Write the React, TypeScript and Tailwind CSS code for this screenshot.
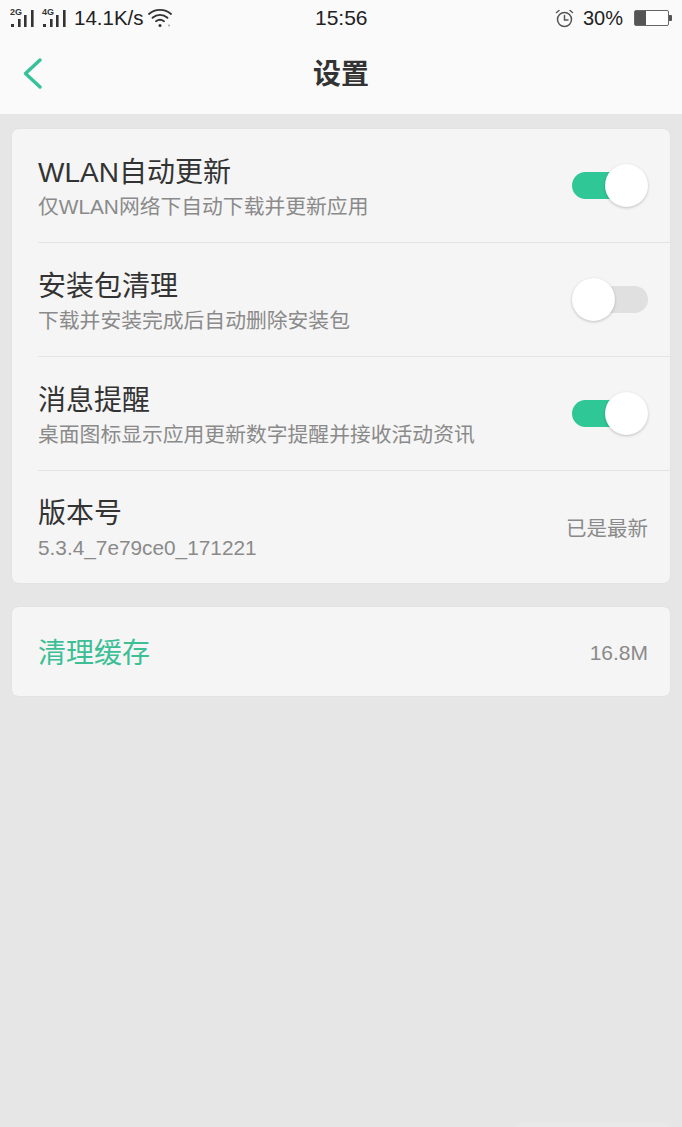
import React from 'react';

const font = { fontFamily: '"Liberation Sans", "Noto Sans CJK SC", sans-serif' };

function Signal({ label }: { label: string }) {
  return (
    <div className="relative w-[26px] h-[20px]">
      <span className="absolute left-0 top-[-1px] text-[9px] leading-[10px] text-[#333] font-bold">{label}</span>
      <svg width="26" height="20" viewBox="0 0 26 20" className="absolute left-0 top-0">
        <rect x="1" y="16" width="3" height="3" fill="#333" />
        <rect x="8" y="11" width="2.6" height="8" fill="#333" />
        <rect x="14" y="7" width="2.6" height="12" fill="#333" />
        <rect x="21" y="2" width="2.6" height="17" fill="#333" />
      </svg>
    </div>
  );
}

function Toggle({ on }: { on: boolean }) {
  return (
    <div className="relative w-[76px] h-[43px] shrink-0">
      <div className={`absolute top-[8px] h-[27px] rounded-full ${on ? 'left-0 w-[50px] bg-[#2fc795]' : 'left-[26px] w-[50px] bg-[#e0e0e0]'}`} />
      <div className={`absolute top-0 w-[43px] h-[43px] rounded-full bg-white shadow-[0_1px_3px_rgba(0,0,0,0.22)] ${on ? 'right-0' : 'left-0'}`} />
    </div>
  );
}

function Row({ title, sub, right, last }: { title: string; sub: string; right: React.ReactNode; last?: boolean }) {
  return (
    <div className={`ml-[26px] pr-[22px] shrink-0 flex items-center justify-between ${last ? 'h-[112px]' : 'h-[114px] border-b border-[#e4e4e4]'}`}>
      <div className="flex flex-col pt-[2px]">
        <div className="text-[28px] leading-[40px] text-[#333]">{title}</div>
        <div className="text-[20.8px] leading-[28px] text-[#8a8a8a]">{sub}</div>
      </div>
      {right}
    </div>
  );
}

export default function App() {
  return (
    <div className="relative w-[682px] h-[1127px] bg-[#e6e6e6] overflow-hidden flex flex-col" style={font}>
      <header className="h-[114px] bg-[#fafafa] shrink-0 flex flex-col">
        <div className="h-[36px] flex items-center justify-between pl-[10px] pr-[10px] relative">
          <div className="flex items-center">
            <Signal label="2G" />
            <div className="w-[6px]" />
            <Signal label="4G" />
            <span className="ml-[6px] text-[20.5px] leading-[28px] text-[#222]">14.1K/s</span>
            <svg width="24" height="20" viewBox="0 0 24 20" fill="none" stroke="#333" strokeWidth="1.8" strokeLinecap="round" className="ml-[4px]">
              <path d="M1 6C7 .5 17 .5 23 6" />
              <path d="M4.5 9.8C9 6 15 6 19.5 9.8" />
              <path d="M8 13.2C10.5 11.4 13.5 11.4 16 13.2" />
              <circle cx="12" cy="17.5" r="1.5" fill="#333" stroke="none" />
              <circle cx="21" cy="17.5" r="0.9" fill="#999" stroke="none" />
            </svg>
          </div>
          <span className="absolute left-[315px] top-[4px] text-[21px] leading-[28px] text-[#222]">15:56</span>
          <div className="flex items-center">
            <svg width="19" height="19" viewBox="0 0 19 19" fill="none" stroke="#555" strokeWidth="1.5" strokeLinecap="round">
              <circle cx="9.5" cy="10.5" r="7" />
              <path d="M9.5 6.5V11H13" />
              <path d="M1.5 3.5L4 1.5" />
              <path d="M17.5 3.5L15 1.5" />
            </svg>
            <span className="ml-[9px] text-[20px] leading-[28px] text-[#222]">30%</span>
            <div className="ml-[11px] flex items-center">
              <div className="w-[35px] h-[16px] border-[1.5px] border-[#666] rounded-[2px] bg-white">
                <div className="w-[11px] h-full bg-[#555]" />
              </div>
              <div className="w-[3px] h-[6px] bg-[#555] rounded-r-[1px]" />
            </div>
          </div>
        </div>
        <div className="flex-1 relative flex items-center justify-center">
          <svg width="19" height="31" viewBox="0 0 19 31" fill="none" stroke="#35c298" strokeWidth="3.4" strokeLinecap="round" strokeLinejoin="round" className="absolute left-[23px] top-[22px]">
            <path d="M17 2L2.5 15.5L17 29" />
          </svg>
          <span className="text-[28px] leading-[40px] font-bold text-[#333]">设置</span>
        </div>
      </header>
      <main className="px-[12px] pt-[15px] flex flex-col gap-[24px]">
        <section className="bg-[#f5f5f5] rounded-[6px] h-[454px] flex flex-col shadow-[0_0_1px_rgba(0,0,0,0.12)]">
          <Row title="WLAN自动更新" sub="仅WLAN网络下自动下载并更新应用" right={<Toggle on />} />
          <Row title="安装包清理" sub="下载并安装完成后自动删除安装包" right={<Toggle on={false} />} />
          <Row title="消息提醒" sub="桌面图标显示应用更新数字提醒并接收活动资讯" right={<Toggle on />} />
          <Row title="版本号" sub="5.3.4_7e79ce0_171221" last right={<span className="pt-[5px] text-[20.5px] text-[#8a8a8a]">已是最新</span>} />
        </section>
        <section className="bg-[#f5f5f5] rounded-[6px] h-[89px] pl-[26px] pr-[22px] flex items-center justify-between shadow-[0_0_1px_rgba(0,0,0,0.12)]">
          <span className="pt-[4px] text-[28px] leading-[40px] text-[#3cbf95]">清理缓存</span>
          <span className="pt-[2px] text-[21px] text-[#8a8a8a]">16.8M</span>
        </section>
      </main>
      <div className="absolute left-[515px] bottom-0 w-[155px] h-[3px] bg-white/25 blur-[2px]" />
    </div>
  );
}
